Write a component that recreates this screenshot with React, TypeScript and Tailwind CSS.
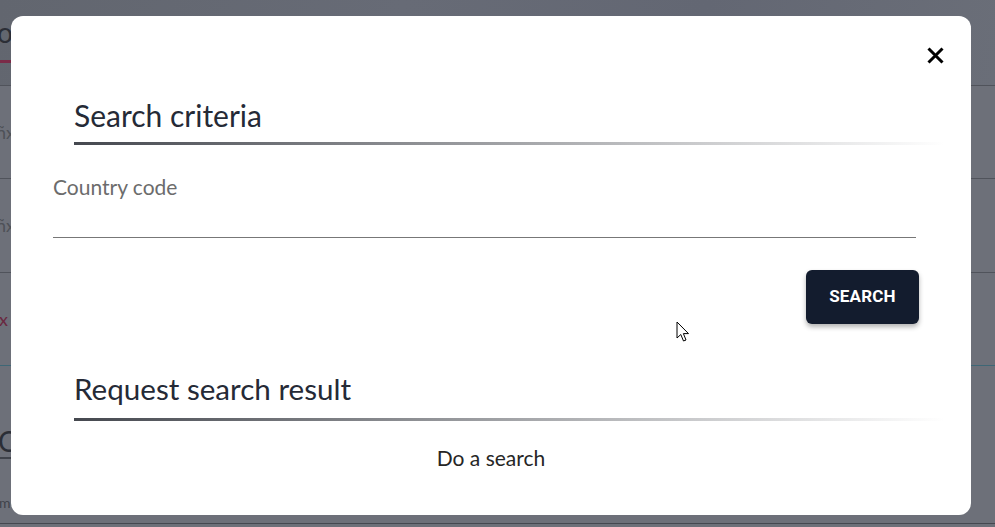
import React from "react";

function BgRow({ children, className = "" }: { children?: React.ReactNode; className?: string }) {
  return <div className={`border-b border-[#50535b] flex items-center ${className}`}>{children}</div>;
}

export default function App() {
  return (
    <div
      className="relative w-[995px] h-[527px] overflow-hidden bg-[#6d7079]"
      style={{ fontFamily: "Lato, 'Noto Sans', sans-serif" }}
    >
      {/* background page (dimmed) */}
      <div className="flex flex-col">
        <div className="h-[86px] border-b border-[#50535b] bg-[linear-gradient(100deg,#62666f,#676b76_40%,#636773_70%,#6a6e78)]">
          <div className="w-[200px] h-[63px] border-b-[3px] border-[#7b2b48] flex items-center">
            <span className="text-[28px] text-[#2b2e36] -ml-[3px] mt-[4px]">o</span>
          </div>
        </div>
        <BgRow className="h-[93px]">
          <span className="text-[18px] text-[#4e5057] -ml-[4px]">ñx</span>
        </BgRow>
        <BgRow className="h-[94px]">
          <span className="text-[18px] text-[#4e5057] -ml-[4px]">ñx</span>
        </BgRow>
        <div className="h-[93px] border-b border-[#3e6776] flex items-center">
          <span className="text-[18px] text-[#6a2740] -ml-[1px]">x</span>
        </div>
        <div className="h-[158px] flex flex-col border-b border-[#454850]">
          <div className="h-[93px] border-b-2 border-[#3f424a] w-[200px] flex items-end pb-[0px]">
            <span className="text-[28px] leading-[32px] text-[#2b2e36] -ml-[2px]">Co</span>
          </div>
          <div className="flex-1 flex items-end pb-[10px]">
            <span className="text-[14px] text-[#3f4249] -ml-[1px]">m</span>
          </div>
        </div>
      </div>

      {/* modal */}
      <div className="absolute left-[11px] top-[16px] w-[960px] h-[499px] bg-white rounded-[12px] flex flex-col pl-[42px] pr-[52px]">
        <div className="flex justify-end pt-[31px] -mr-[25px]">
          <svg width="17" height="17" viewBox="0 0 17 17">
            <path d="M1.5 1.5 L15.5 15.5 M15.5 1.5 L1.5 15.5" stroke="#000" strokeWidth="3" />
          </svg>
        </div>

        <div className="ml-[21px] -mr-[26px] mt-[33px]">
          <h2 className="text-[30px] leading-[36px] text-[#252a36]">Search criteria</h2>
          <div className="mt-[9px] h-[3px] bg-[linear-gradient(to_right,#45484f,rgba(255,255,255,0))]" />
        </div>

        <div className="mt-[29px] border-b border-[#777777] pb-[37px] mr-[3px]">
          <label className="block text-[21px] leading-[26px] text-[#6c6c6c]">Country code</label>
        </div>

        <div className="flex justify-end mt-[32px]">
          <button
            className="w-[113px] h-[54px] rounded-[6px] bg-[#131c2e] text-white text-[17px] font-bold shadow-[0_3px_5px_rgba(0,0,0,0.3)] tracking-[0.2px]"
            style={{ fontFamily: "Roboto, 'Liberation Sans', sans-serif" }}
          >
            SEARCH
          </button>
        </div>

        <div className="ml-[21px] -mr-[26px] mt-[47px]">
          <h2 className="text-[29.6px] leading-[36px] text-[#252a36]">Request search result</h2>
          <div className="mt-[11px] h-[3px] bg-[linear-gradient(to_right,#45484f,rgba(255,255,255,0))]" />
        </div>

        <div className="mt-[24px] text-center text-[21px] leading-[26px] text-[#262626] pl-[10px]">
          Do a search
        </div>
      </div>

      {/* mouse cursor */}
      <svg className="absolute left-[676px] top-[321px]" width="14" height="22" viewBox="0 0 14 22">
        <path
          d="M1 1 L1 17 L4.8 13.5 L7.5 20 L10 19 L7.4 12.6 L12.5 12.6 Z"
          fill="#fff"
          stroke="#000"
          strokeWidth="1"
          strokeLinejoin="miter"
        />
      </svg>
    </div>
  );
}
